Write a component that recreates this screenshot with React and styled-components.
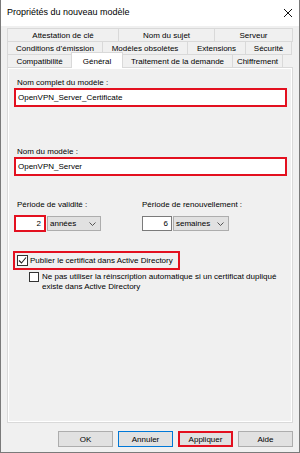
import React from 'react';
import styled, { createGlobalStyle } from 'styled-components';

const GlobalStyle = createGlobalStyle`
  html, body { margin: 0; padding: 0; background: #fff; }
  body { font-family: "Liberation Sans", Arial, sans-serif; }
`;

const RED = '#e3101f';

const Window = styled.div`
  width: 300px;
  height: 453px;
  box-sizing: border-box;
  display: flex;
  flex-direction: column;
  background: #f0f0f0;
  border: 1px solid #7a7a7a;
  border-top: none;
  color: #000;
  font-size: 8px;
`;

const TitleBar = styled.div`
  height: 26px;
  flex: none;
  display: flex;
  align-items: center;
  justify-content: space-between;
  padding: 0 6px 0 6px;
  background: #fff;
`;

const Title = styled.span`
  font-size: 9px;
  margin-top: -2px;
`;

const Body = styled.div`
  flex: 1;
  display: flex;
  flex-direction: column;
  padding: 2px 6px 0 6px;
`;

const TabRow = styled.div`
  display: flex;
  height: 14px;
  margin-top: ${({ first }) => (first ? '0' : '-1px')};
`;

const Tab = styled.div`
  box-sizing: border-box;
  width: ${({ w }) => w}px;
  height: ${({ active }) => (active ? '16px' : '14px')};
  margin-top: ${({ active }) => (active ? '-2px' : '0')};
  margin-right: -1px;
  display: flex;
  align-items: center;
  justify-content: center;
  border: 1px solid #d9d9d9;
  border-bottom: ${({ active }) => (active ? 'none' : '1px solid #d9d9d9')};
  background: ${({ active }) => (active ? '#fff' : '#f0f0f0')};
  position: ${({ active }) => (active ? 'relative' : 'static')};
  z-index: ${({ active }) => (active ? 1 : 'auto')};
  white-space: nowrap;
  padding-top: ${({ active }) => (active ? '1px' : '0')};
`;

const Panel = styled.div`
  box-sizing: border-box;
  width: 286px;
  height: 356px;
  margin-top: -1px;
  border: 1px solid #d9d9d9;
  box-shadow: inset 0 0 0 1px #fff;
  display: flex;
  flex-direction: column;
  padding: 10px 5px 0 6px;
`;

const Label = styled.div`
  line-height: 10px;
  height: 10px;
  margin-left: ${({ indent = 3 }) => indent}px;
  white-space: nowrap;
`;

const TextField = styled.div`
  box-sizing: border-box;
  height: 19px;
  margin-top: ${({ gap = 0 }) => gap}px;
  border: 2px solid ${RED};
  background: #fff;
  display: flex;
  align-items: center;
  padding-left: 2px;
`;

const PeriodGrid = styled.div`
  display: grid;
  grid-template-columns: 128px auto;
  margin-top: 24px;
`;

const Group = styled.div`
  display: flex;
  flex-direction: column;
  gap: 5px;
`;

const Controls = styled.div`
  display: flex;
  align-items: center;
  height: 17px;
  gap: 1px;
`;

const NumberBox = styled.div`
  box-sizing: border-box;
  width: ${({ w }) => w}px;
  height: ${({ highlight }) => (highlight ? '17px' : '15px')};
  border: ${({ highlight }) => (highlight ? `2px solid ${RED}` : '1px solid #7a7a7a')};
  background: #fff;
  display: flex;
  align-items: center;
  justify-content: flex-end;
  padding-right: 3px;
`;

const Select = styled.div`
  box-sizing: border-box;
  width: ${({ w }) => w}px;
  height: 15px;
  border: 1px solid #adadad;
  background: #e1e1e1;
  display: flex;
  align-items: center;
  justify-content: space-between;
  padding: 0 4px 0 2px;
`;

const CheckHighlight = styled.div`
  align-self: flex-start;
  box-sizing: border-box;
  height: 19px;
  margin: 19px 0 0 -1px;
  padding: 0 5px 0 2px;
  border: 2px solid ${RED};
  display: flex;
  align-items: center;
  gap: 2px;
`;

const Box = styled.div`
  box-sizing: border-box;
  width: ${({ size }) => size}px;
  height: ${({ size }) => size}px;
  border: 1px solid #333;
  background: #fff;
  flex: none;
  display: flex;
  align-items: center;
  justify-content: center;
`;

const CheckRow = styled.div`
  display: flex;
  align-items: flex-start;
  gap: 3px;
  margin: 2px 0 0 15px;
`;

const CheckText = styled.div`
  line-height: 10px;
  white-space: ${({ wrap }) => (wrap ? 'normal' : 'nowrap')};
`;

const Footer = styled.div`
  flex: 1;
  display: flex;
  justify-content: flex-end;
  align-items: flex-start;
  gap: 5px;
  padding: 8px 0 0 0;
`;

const Button = styled.div`
  box-sizing: border-box;
  width: 55px;
  height: 16px;
  display: flex;
  align-items: center;
  justify-content: center;
  background: #e1e1e1;
  border: ${({ variant }) => {
    if (variant === 'default') return '1px solid #0078d7';
    if (variant === 'marked') return `2px solid ${RED}`;
    return '1px solid #adadad';
  }};
`;

const Chevron = () => (
  <svg width="7" height="4" viewBox="0 0 7 4">
    <polyline points="0.5,0.5 3.5,3.5 6.5,0.5" fill="none" stroke="#444" strokeWidth="0.9" />
  </svg>
);

const CloseIcon = () => (
  <svg width="10" height="10" viewBox="0 0 10 10">
    <line x1="1" y1="1" x2="9" y2="9" stroke="#111" strokeWidth="1" />
    <line x1="9" y1="1" x2="1" y2="9" stroke="#111" strokeWidth="1" />
  </svg>
);

const tabRows = [
  [
    { label: 'Attestation de clé', w: 112 },
    { label: 'Nom du sujet', w: 97 },
    { label: 'Serveur', w: 79 },
  ],
  [
    { label: 'Conditions d’émission', w: 96 },
    { label: 'Modèles obsolètes', w: 86 },
    { label: 'Extensions', w: 59 },
    { label: 'Sécurité', w: 47 },
  ],
  [
    { label: 'Compatibilité', w: 65 },
    { label: 'Général', w: 52, active: true },
    { label: 'Traitement de la demande', w: 111 },
    { label: 'Chiffrement', w: 51 },
  ],
];

const App = () => (
  <>
    <GlobalStyle />
    <Window>
      <TitleBar>
        <Title>Propriétés du nouveau modèle</Title>
        <CloseIcon />
      </TitleBar>
      <Body>
        {tabRows.map((row, i) => (
          <TabRow key={row[0].label} first={i === 0}>
            {row.map((tab) => (
              <Tab key={tab.label} w={tab.w} active={tab.active}>{tab.label}</Tab>
            ))}
          </TabRow>
        ))}
        <Panel>
          <Label>Nom complet du modèle :</Label>
          <TextField>OpenVPN_Server_Certificate</TextField>
          <Label style={{ marginTop: 40 }}>Nom du modèle :</Label>
          <TextField>OpenVPN_Server</TextField>
          <PeriodGrid>
            <Group>
              <Label>Période de validité :</Label>
              <Controls>
                <NumberBox w={32} highlight>2</NumberBox>
                <Select w={54}>
                  années
                  <Chevron />
                </Select>
              </Controls>
            </Group>
            <Group>
              <Label indent={0}>Période de renouvellement :</Label>
              <Controls>
                <NumberBox w={30}>6</NumberBox>
                <Select w={56}>
                  semaines
                  <Chevron />
                </Select>
              </Controls>
            </Group>
          </PeriodGrid>
          <CheckHighlight>
            <Box size={11}>
              <svg width="9" height="9" viewBox="0 0 9 9">
                <polyline points="1,4.5 3.5,7 8,1.5" fill="none" stroke="#222" strokeWidth="1.1" />
              </svg>
            </Box>
            <CheckText>Publier le certificat dans Active Directory</CheckText>
          </CheckHighlight>
          <CheckRow>
            <Box size={10} />
            <CheckText wrap>
              Ne pas utiliser la réinscription automatique si un certificat dupliqué
              <br />
              existe dans Active Directory
            </CheckText>
          </CheckRow>
        </Panel>
        <Footer>
          <Button>OK</Button>
          <Button variant="default">Annuler</Button>
          <Button variant="marked">Appliquer</Button>
          <Button>Aide</Button>
        </Footer>
      </Body>
    </Window>
  </>
);

export default App;
